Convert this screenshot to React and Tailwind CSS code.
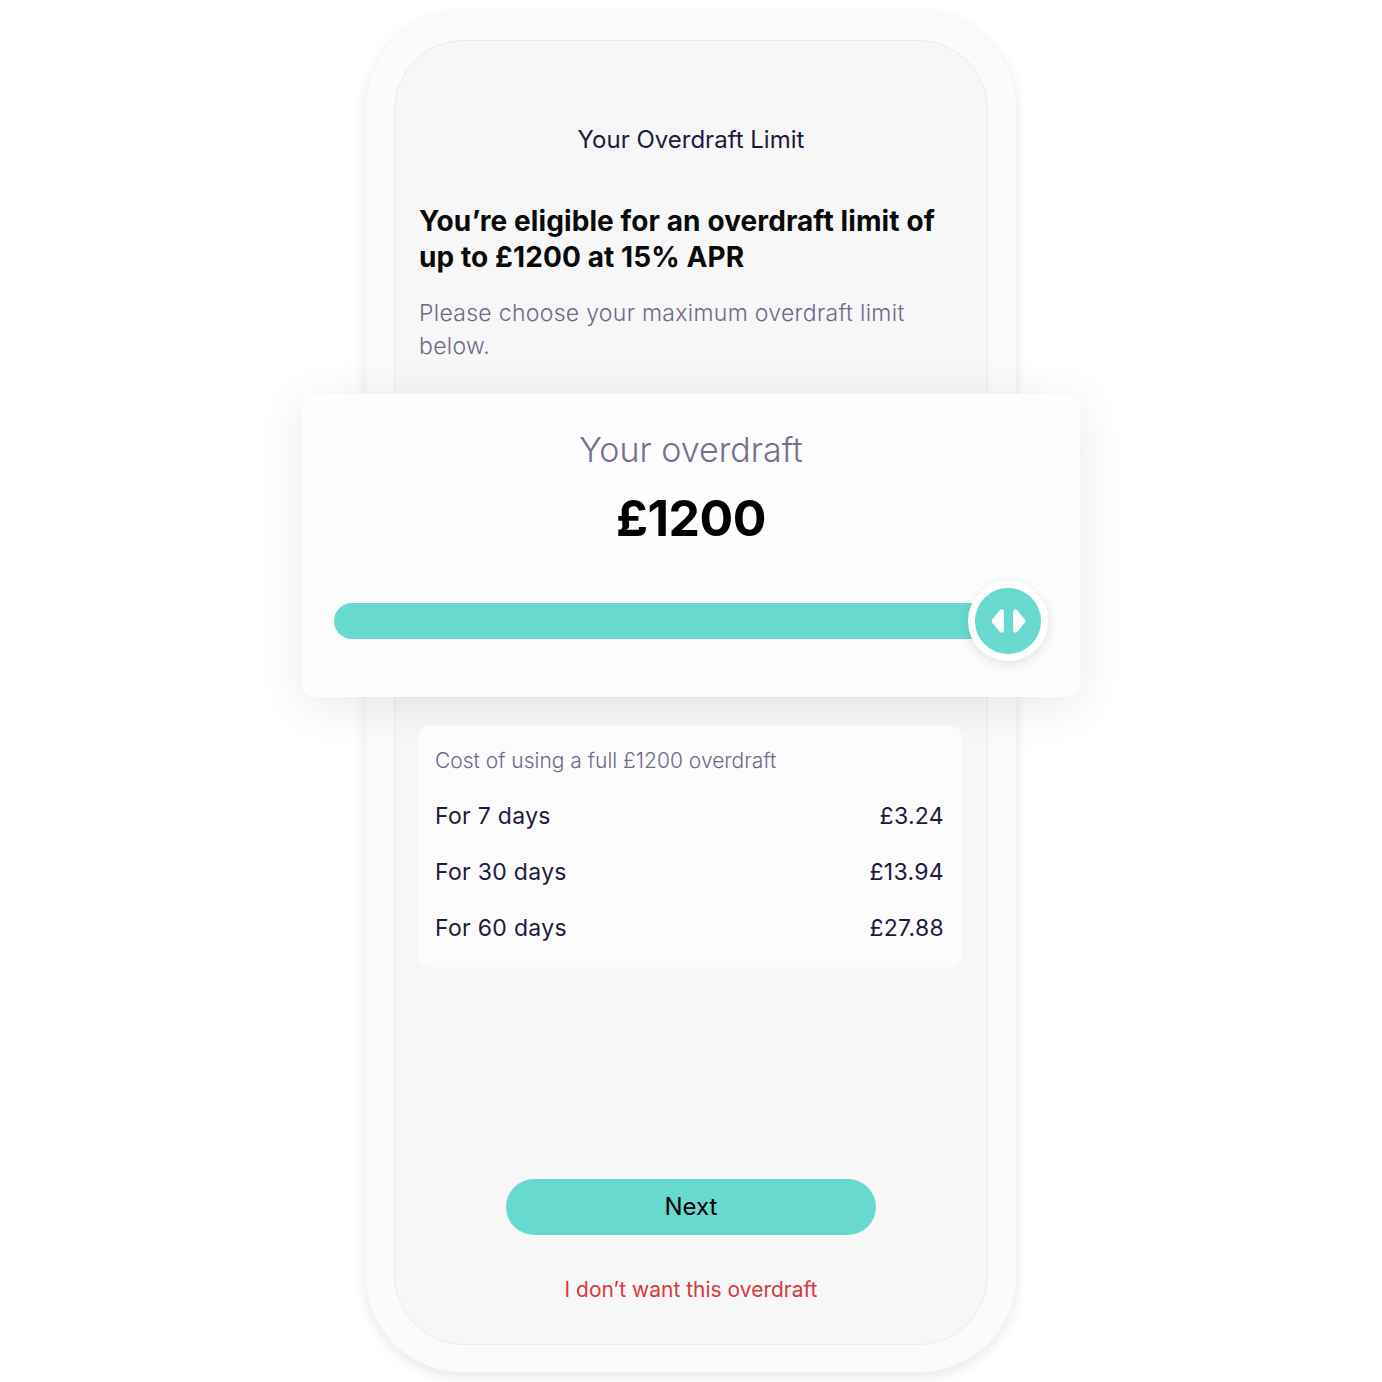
export default function App() {
  const rows = [
    { label: "For 7 days", value: "£3.24" },
    { label: "For 30 days", value: "£13.94" },
    { label: "For 60 days", value: "£27.88" },
  ];

  return (
    <div
      className="w-[1382px] h-[1382px] bg-white flex justify-center pt-[12px]"
      style={{ fontFamily: "Inter, 'Noto Sans', sans-serif" }}
    >
      {/* phone frame */}
      <div className="w-[650px] h-[1360px] rounded-[96px] bg-[#fbfbfb] pt-[28px] px-[28px] pb-[27px] shadow-[0_4px_14px_rgba(0,0,0,0.10)]">
        <div className="h-full rounded-[70px] bg-[#f7f7f7] border border-[#ebebeb] flex flex-col">
          <div className="pt-[84px] text-center text-[24px] leading-[30px] text-[#1f1a3d]">
            Your Overdraft Limit
          </div>

          <div className="px-[24px] mt-[48px]">
            <h1 className="text-[28px] leading-[36px] font-bold text-[#0a0a0a] tracking-[0.1px]">
              You’re eligible for an overdraft limit of up to £1200 at 15% APR
            </h1>
            <p className="mt-[22px] text-[23px] leading-[33px] text-[#6f6888] font-light tracking-[0.3px]">
              Please choose your maximum overdraft limit below.
            </p>
          </div>

          {/* slider card */}
          <div className="mt-[31px] -ml-[93px] -mr-[93px] bg-[#fdfdfd] rounded-[12px] shadow-[0_8px_50px_rgba(0,0,0,0.09)] pt-[36px] pb-[36px] px-[32px]">
            <div className="text-center text-[34px] leading-[40px] font-light text-[#776e91]">
              Your overdraft
            </div>
            <div className="mt-[20px] text-center text-[50px] leading-[56px] font-bold text-black tracking-[-0.5px]">
              £1200
            </div>
            <div className="mt-[35px] flex items-center">
              <div className="flex-1 h-[36px] rounded-l-full bg-[#68d9cf]" />
              <div className="relative -ml-[40px] w-[80px] h-[80px] rounded-full bg-[#68d9cf] border-[7px] border-white shadow-[0_3px_12px_rgba(0,0,0,0.12)] flex items-center justify-center gap-[5px]">
                <svg width="17" height="26" viewBox="0 0 16 24">
                  <path d="M12 1 Q14 1 14 3 L14 21 Q14 23 12 23 Q11 23 10 22 L3 13.5 Q2 12 3 10.5 L10 2 Q11 1 12 1 Z" fill="white" />
                </svg>
                <svg width="17" height="26" viewBox="0 0 16 24">
                  <path d="M4 1 Q2 1 2 3 L2 21 Q2 23 4 23 Q5 23 6 22 L13 13.5 Q14 12 13 10.5 L6 2 Q5 1 4 1 Z" fill="white" />
                </svg>
              </div>
            </div>
          </div>

          {/* cost table */}
          <div className="mt-[29px] ml-[22px] mr-[25px] bg-[#fcfcfc] rounded-[12px] pt-[21px] pb-[11px] px-[18px]">
            <div className="text-[21px] leading-[28px] font-light text-[#6f6888]">
              Cost of using a full £1200 overdraft
            </div>
            <div className="mt-[13px]">
              {rows.map((r) => (
                <div key={r.label} className="h-[56px] flex items-center justify-between text-[23px] tracking-[0.3px] text-[#1f1a3d]">
                  <span>{r.label}</span>
                  <span>{r.value}</span>
                </div>
              ))}
            </div>
          </div>

          <div className="mt-auto flex flex-col items-center pb-[40px]">
            <button className="w-[370px] h-[56px] rounded-full bg-[#68d9cf] text-[24px] text-black">
              Next
            </button>
            <div className="mt-[41px] text-[21px] leading-[28px] text-[#d83a3a]">
              I don’t want this overdraft
            </div>
          </div>
        </div>
      </div>
    </div>
  );
}
